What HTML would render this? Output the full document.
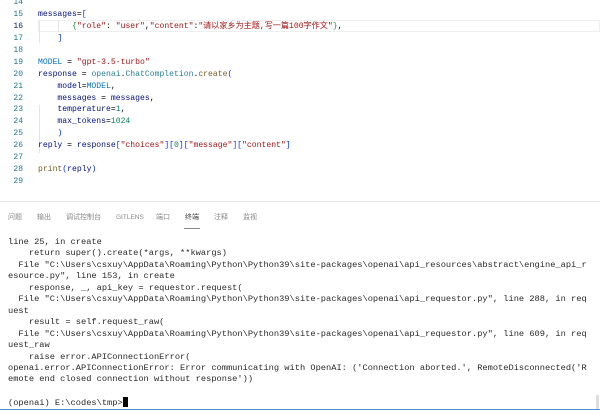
<!DOCTYPE html>
<html><head><meta charset="utf-8"><style>
*{margin:0;padding:0;box-sizing:border-box}
body{width:600px;height:410px;background:#fff;overflow:hidden;position:relative;font-family:"Liberation Mono","Noto Sans CJK SC",monospace}
.ln{position:absolute;left:0;width:23px;text-align:right;font-size:8px;color:#237893;line-height:11.93px}
.code{position:absolute;left:38px;font-size:8.1px;line-height:11.93px;color:#001080;white-space:pre}
.s{color:#a31515}.n{color:#098658}.c{color:#267f99}.f{color:#795e26}.k{color:#0070c1}.b{color:#0431fa}.p{color:#000}.g{color:#319331}
.cur{position:absolute;left:38px;right:0;top:20px;height:12px;border:1px solid #eee}
.guide{position:absolute;width:1px;background:#e4e4e4}
.tabs{position:absolute;top:213px;font-family:"Liberation Sans","Noto Sans CJK SC",sans-serif;font-size:7px;color:#888}
.tabs span{position:absolute;white-space:nowrap;line-height:10px;height:10px;top:0}
.term{position:absolute;left:8px;top:237px;font-size:8.7px;line-height:11.45px;color:#2a2a2a;white-space:pre}
</style></head><body>
<div class="cur"></div>
<div class="guide" style="left:39px;top:21px;height:22px"></div>
<div class="guide" style="left:58px;top:21px;height:11px"></div>
<div class="guide" style="left:39px;top:105px;height:48px"></div>
<div class="ln" style="top:-3px">14<br>15<br><span style="color:#0b216f">16</span><br>17<br>18<br>19<br>20<br>21<br>22<br>23<br>24<br>25<br>26<br>27<br>28<br>29</div>
<div class="code" style="top:-3px">
messages<span class="p">=</span><span class="b">[</span>
       <span class="g">{</span><span class="s">"role"</span><span class="p">: </span><span class="s">"user"</span><span class="p">,</span><span class="s">"content"</span><span class="p">:</span><span class="s">"请以家乡为主题,写一篇100字作文"</span><span class="g">}</span><span class="p">,</span>
    <span class="b">]</span>

<span class="k">MODEL</span> <span class="p">=</span> <span class="s">"gpt-3.5-turbo"</span>
response <span class="p">=</span> <span class="c">openai</span><span class="p">.</span><span class="c">ChatCompletion</span><span class="p">.</span><span class="f">create</span><span class="b">(</span>
    model<span class="p">=</span><span class="k">MODEL</span><span class="p">,</span>
    messages <span class="p">=</span> messages<span class="p">,</span>
    temperature<span class="p">=</span><span class="n">1</span><span class="p">,</span>
    max_tokens<span class="p">=</span><span class="n">1024</span>
    <span class="b">)</span>
reply <span class="p">=</span> response<span class="b">[</span><span class="s">"choices"</span><span class="b">][</span><span class="n">0</span><span class="b">][</span><span class="s">"message"</span><span class="b">][</span><span class="s">"content"</span><span class="b">]</span>

<span class="f">print</span><span class="b">(</span>reply<span class="b">)</span>
</div>
<div style="position:absolute;left:0;right:0;top:201px;height:1px;background:#e8e8e8"></div>
<div class="tabs">
<span style="left:8px">问题</span><span style="left:37px">输出</span><span style="left:66px">调试控制台</span><span style="left:116px;font-size:6.5px">GITLENS</span><span style="left:156px">端口</span><span style="left:185px;color:#444">终端</span><span style="left:214px">注释</span><span style="left:243px">监视</span>
</div>
<div style="position:absolute;left:184px;top:228px;width:16px;height:1px;background:#888"></div>
<div class="term">line 25, in create
    return super().create(*args, **kwargs)
  File "C:\Users\csxuy\AppData\Roaming\Python\Python39\site-packages\openai\api_resources\abstract\engine_api_r
esource.py", line 153, in create
    response, _, api_key = requestor.request(
  File "C:\Users\csxuy\AppData\Roaming\Python\Python39\site-packages\openai\api_requestor.py", line 288, in req
uest
    result = self.request_raw(
  File "C:\Users\csxuy\AppData\Roaming\Python\Python39\site-packages\openai\api_requestor.py", line 609, in req
uest_raw
    raise error.APIConnectionError(
openai.error.APIConnectionError: Error communicating with OpenAI: ('Connection aborted.', RemoteDisconnected('R
emote end closed connection without response'))

(openai) E:\codes\tmp&gt;<span style="display:inline-block;width:5px;height:10px;background:#000;vertical-align:-2px"></span></div>
<div style="position:absolute;right:1px;top:395px;width:3px;height:14px;background:#ddd"></div>
<div style="position:absolute;left:0;right:0;top:409px;height:1px;background:#4a90d9"></div>
</body></html>
